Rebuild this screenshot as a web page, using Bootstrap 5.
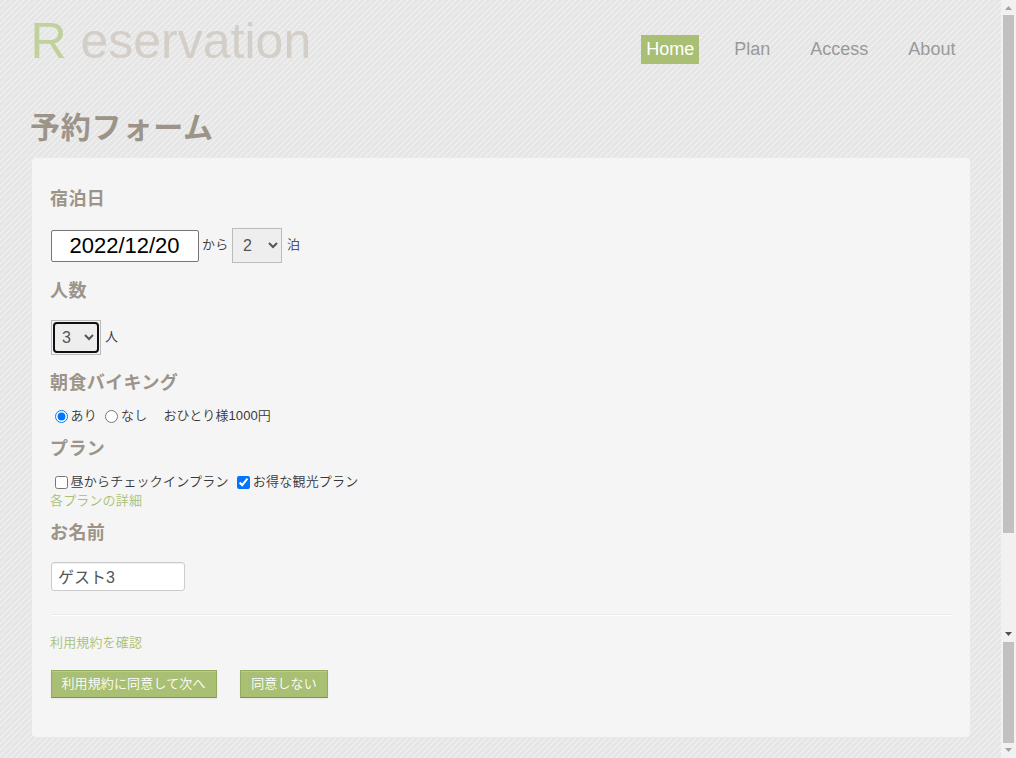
<!DOCTYPE html>
<html lang="ja">
<head>
<meta charset="utf-8">
<meta name="viewport" content="width=device-width, initial-scale=1">
<title>Reservation</title>
<link href="https://cdn.jsdelivr.net/npm/bootstrap@5.3.0/dist/css/bootstrap.min.css" rel="stylesheet">
<style>
html,body{height:100%;overflow:hidden}
body{font-family:"Liberation Sans","Noto Sans CJK JP",sans-serif;font-weight:350;font-size:13px;line-height:18px;color:#383838;background:#e6e6e6}
.page{width:1001px;padding:0 31px 0 32px;background:url("data:image/svg+xml,%3Csvg xmlns='http://www.w3.org/2000/svg' width='6' height='6' shape-rendering='crispEdges'%3E%3Cpath fill='%23f5f5f5' d='M5 0h1v1h-1zM4 1h1v1h-1zM3 2h1v1h-1zM2 3h1v1h-1zM1 4h1v1h-1zM0 5h1v1h-1z'/%3E%3C/svg%3E") #e6e6e6}
.site-head{height:100px}
.brand{font-size:50px;line-height:60px;padding-top:11px;margin-left:-1.5px;color:#d3cec7;white-space:pre}
.brand span{color:#c0d19c}
.menu{padding-top:35px;gap:30px;margin-right:9.6px}
.menu .nav-link{font-size:18px;line-height:29px;height:29px;padding:0 5px;color:#999;border-radius:0}
.menu .nav-link.active{background:#a9bf74;color:#fff}
h1,h3{font-weight:700;color:#9c9488;margin:0}
h1{font-size:30px;line-height:36px;padding-top:10px;height:58px;margin-left:-2px;letter-spacing:.8px}
h3{font-size:18px;line-height:37px;height:36px;margin-left:-1px;letter-spacing:.4px}
.panel{width:938px;height:579px;background:#f5f5f5;border-radius:4px;padding:23px 19px;box-shadow:0 0 0 1px #e8e8e8}
.line{display:flex;align-items:center;letter-spacing:.22px}
.date{width:148px;height:32px;font:22px "Liberation Sans",sans-serif;text-align:center;border:1px solid #767676;border-radius:2px;background:#fff;color:#000;padding:0 1px 0 0;margin-top:2px;letter-spacing:0}
.pick{width:50px;height:35px;border:1px solid #bbb;background:#eee;color:#555;font-size:16px;padding:4px 0 4px 6px;border-radius:0}
.pick.on{border:2px solid #101010;border-radius:4px;width:46px;height:31px;padding:0 0 0 3px;outline:0}
.pickbox{width:50px;height:35px;border:1px solid #bbb;padding:1px}
.tick{width:13px;height:13px;margin:1px 3px 0 3.5px}
.later{margin-left:8px}
.guest{width:134px;height:29px;border:1px solid #ccc;border-radius:3px;padding:0 6px;font-size:16px;color:#555;background:#fff;box-shadow:inset 0 1px 1px rgba(0,0,0,.07)}
a.more{color:#a9bf74;text-decoration:none;margin-left:-1px;letter-spacing:.15px}
.rule{height:2px;border-top:1px solid #eaeaea;border-bottom:1px solid #fff;margin:13px 0 18px}
.actions{margin-top:18px;gap:23px}
.go{height:28px;padding:0 10px 0 9px;font-size:13px;font-weight:350;letter-spacing:.14px;line-height:26px;border-radius:0;color:#fff;background:#a9bf74;border:1px solid #96ab62;border-bottom-color:#7d9150;box-shadow:inset 0 1px 0 rgba(255,255,255,.2),0 1px 2px rgba(0,0,0,.05)}
.go-next{width:166px}
.go-back{width:88px;padding-left:10px}
.track{width:15px;background:#f1f1f1;padding:0 2px}
.track svg{display:block;margin:0 2px}
.thumb{width:11px;background:#c1c1c1}
.thumb-main{height:518px;margin-bottom:98px}
.thumb-end{height:101px;margin-top:5px}
</style>
</head>
<body class="d-flex">
<div class="page flex-shrink-0">
<header class="site-head d-flex justify-content-between">
<div class="brand"><span>R</span> eservation</div>
<nav class="nav menu"><a class="nav-link active" href="#">Home</a><a class="nav-link" href="#">Plan</a><a class="nav-link" href="#">Access</a><a class="nav-link" href="#">About</a></nav>
</header>
<h1>予約フォーム</h1>
<form class="panel">
<h3>宿泊日</h3>
<div class="line" style="height:56px"><input class="date" value="2022/12/20"><span style="margin:0 3.6px 0 3px">から</span><select class="pick"><option>2</option></select><span style="margin-left:5px">泊</span></div>
<h3>人数</h3>
<div class="line" style="height:56px"><div class="pickbox d-flex"><select class="pick on"><option>3</option></select></div><span class="ms-1">人</span></div>
<h3>朝食バイキング</h3>
<div class="line" style="height:30px"><input class="tick" type="radio" name="b" checked>あり<input class="tick later" type="radio" name="b">なし<span style="margin-left:16px;letter-spacing:.1px">おひとり様1000円</span></div>
<h3>プラン</h3>
<div class="line" style="height:30px"><input class="tick" type="checkbox">昼からチェックインプラン<input class="tick later" type="checkbox" checked>お得な観光プラン</div>
<div style="height:18px;line-height:8px"><a class="more" href="#">各プランの詳細</a></div>
<h3>お名前</h3>
<div class="line" style="height:50px"><input class="guest" value="ゲスト3"></div>
<div class="rule"></div>
<div><a class="more" href="#">利用規約を確認</a></div>
<div class="actions d-flex"><button type="button" class="btn go go-next">利用規約に同意して次へ</button><button type="button" class="btn go go-back">同意しない</button></div>
</form>
</div>
<div class="track">
<svg width="7" height="15"><path d="M0 10L3.5 6L7 10z" fill="#a3a3a3"/></svg>
<div class="thumb thumb-main"></div>
<svg width="7" height="6"><path d="M0 1L3.5 5L7 1z" fill="#505050"/></svg>
<div class="thumb thumb-end"></div>
<svg width="7" height="15"><path d="M0 5L3.5 9L7 5z" fill="#a3a3a3"/></svg>
</div>
<script src="https://cdn.jsdelivr.net/npm/bootstrap@5.3.0/dist/js/bootstrap.bundle.min.js"></script>
</body>
</html>
